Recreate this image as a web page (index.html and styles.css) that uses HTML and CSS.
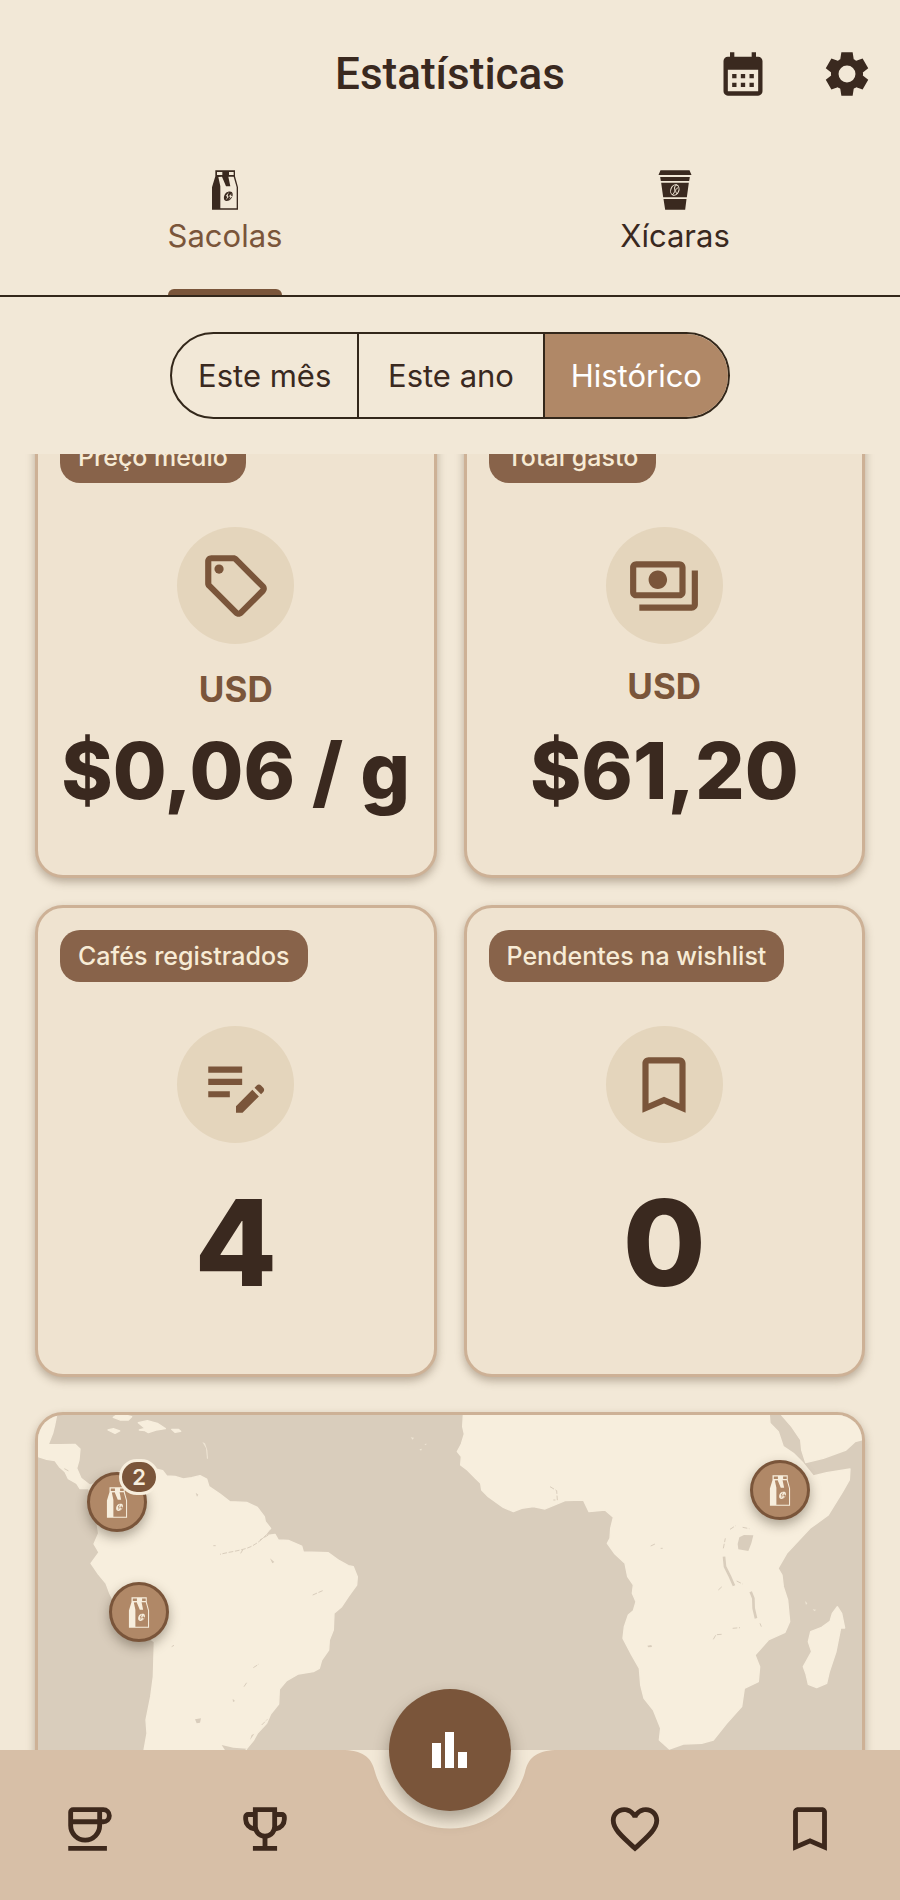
FILE: index.html
```html
<!DOCTYPE html>
<html lang="pt-BR">
<head>
    <meta charset="UTF-8">
    <meta name="viewport" content="width=device-width, initial-scale=1.0">
    <title>Estatísticas</title>
    <link rel="stylesheet" href="styles.css">
</head>
<body>
    <!-- shared coffee bag icon -->
    <svg class="sprite" aria-hidden="true">
        <symbol id="bag" viewBox="64 43 82 120">
            <path fill-rule="evenodd" d="M76 44H135V62L144 95V162H66V95L76 62ZM81 49V58H97V49ZM117 49V58H131V49ZM85 64L91 92V158H140V95L131 63H115L121 92H108L96 63Z"/>
            <path fill-rule="evenodd" d="M113 109C120 106 128 108 128 115C129 126 119 137 109 136C101 135 100 125 104 117C106 113 109 110 113 109ZM117 109L108 120L112 124L107 134L116 124L113 119ZM126 113L117 121L121 125L116 132L127 122L122 119Z"/>
        </symbol>
        <symbol id="bookmark" viewBox="0 0 24 24">
            <path d="M17 3H7c-1.1 0-2 .9-2 2v16l7-3 7 3V5c0-1.1-.9-2-2-2zm0 15-5-2.18L7 18V5h10v13z"/>
        </symbol>
    </svg>

    <div class="app">
        <header>
            <h1>Estatísticas</h1>
            <div class="actions">
                <button type="button" aria-label="Calendário">
                    <svg viewBox="0 0 24 24"><path d="M19 4h-1V2h-2v2H8V2H6v2H5c-1.1 0-2 .9-2 2v14c0 1.1.9 2 2 2h14c1.1 0 2-.9 2-2V6c0-1.1-.9-2-2-2zm0 16H5V10h14v10zM9 14H7v-2h2v2zm4 0h-2v-2h2v2zm4 0h-2v-2h2v2zm-8 4H7v-2h2v2zm4 0h-2v-2h2v2zm4 0h-2v-2h2v2z"/></svg>
                </button>
                <button type="button" aria-label="Configurações">
                    <svg viewBox="0 0 24 24"><path fill-rule="evenodd" d="M9.4 22l-.5-3.2q-.325-.125-.612-.3t-.563-.375L4.8 19.2l-2.6-4.5 2.5-2Q4.600 12.500 4.600 12.338v-.675q0-.163.1-.338L2.200 9.300l2.600-4.500 2.925 1.075q.275-.2.575-.375t.6-.3L9.400 2h5.200l.5 3.200q.325.125.613.3t.562.375l2.925-1.075 2.600 4.500-2.500 2q.1.175.1.363v.674q0 .163-.1.338l2.500 2-2.600 4.500-2.925-1.050q-.275.2-.575.375t-.6.3l-.5 3.200zM12 8.100a3.900 3.900 0 1 0 0 7.800 3.900 3.900 0 1 0 0-7.800z"/></svg>
                </button>
            </div>
        </header>

        <div class="tabs">
            <button type="button" class="tab active">
                <svg><use href="#bag"/></svg>
                <span>Sacolas</span>
            </button>
            <button type="button" class="tab">
                <svg viewBox="55 43 101 120">
                    <path d="M62 44H149L155 58H56ZM61 64H150L148 76H63ZM64 81H147L141 125H70ZM71 130H140L136 162H76Z"/>
                    <g fill="none" stroke="#f2e8d7" stroke-width="3">
                        <ellipse cx="105" cy="103" rx="12" ry="16" transform="rotate(22 105 103)"/>
                        <path d="M111 87C96 96 113 104 98 117M116 96C104 100 106 108 112 115"/>
                    </g>
                </svg>
                <span>Xícaras</span>
            </button>
        </div>

        <div class="segments">
            <button type="button">Este mês</button>
            <button type="button">Este ano</button>
            <button type="button" class="selected">Histórico</button>
        </div>

        <main>
            <div class="content">
                <section class="cards">
                    <article class="card">
                        <h2>Preço médio</h2>
                        <div class="icon">
                            <svg viewBox="0 0 24 24"><path d="M21.41 11.41l-8.83-8.83c-.37-.37-.88-.58-1.41-.58H4c-1.1 0-2 .9-2 2v7.17c0 .53.21 1.04.59 1.41l8.83 8.83c.78.78 2.05.78 2.83 0l7.17-7.17c.78-.78.78-2.04-.01-2.83zM12.83 20L4 11.17V4h7.17L20 12.83 12.83 20z"/><circle cx="6.5" cy="6.5" r="1.5"/></svg>
                        </div>
                        <div class="value">
                            <span class="currency">USD</span>
                            <strong>$0,06 / g</strong>
                        </div>
                    </article>
                    <article class="card">
                        <h2>Total gasto</h2>
                        <div class="icon">
                            <svg viewBox="0 0 24 24"><path d="M19 14V6c0-1.1-.9-2-2-2H3c-1.1 0-2 .9-2 2v8c0 1.1.9 2 2 2h14c1.1 0 2-.9 2-2zm-2 0H3V6h14v8zm-7-7c-1.66 0-3 1.34-3 3s1.34 3 3 3 3-1.34 3-3-1.34-3-3-3zm13 0v11c0 1.1-.9 2-2 2H4v-2h17V7h2z"/></svg>
                        </div>
                        <div class="value large">
                            <span class="currency">USD</span>
                            <strong>$61,20</strong>
                        </div>
                    </article>
                    <article class="card">
                        <h2>Cafés registrados</h2>
                        <div class="icon">
                            <svg viewBox="0 0 24 24"><path d="M3 10h11v2H3v-2zm0-2h11V6H3v2zm0 8h7v-2H3v2zm15.01-3.13.71-.71c.39-.39 1.02-.39 1.41 0l.71.71c.39.39.39 1.02 0 1.41l-.71.71-2.12-2.12zm-.71.71-5.3 5.3V21h2.12l5.3-5.3-2.12-2.12z"/></svg>
                        </div>
                        <div class="value count"><strong>4</strong></div>
                    </article>
                    <article class="card">
                        <h2>Pendentes na wishlist</h2>
                        <div class="icon">
                            <svg><use href="#bookmark"/></svg>
                        </div>
                        <div class="value count"><strong>0</strong></div>
                    </article>
                </section>

                <section class="map">
                    <svg class="world" viewBox="54 45 2472 1140" aria-hidden="true">
                        <g class="land">
                            <!-- Central and South America -->
                            <path d="M54 45H110L104 75 98 100 85 133 120 134 165 133 180 147 177 180 170 205 183 235 210 256 300 215 400 205 428 212 440 228 465 229 490 237 515 233 540 227 560 237 567 260 600 282 630 305 680 307 712 322 733 350 736 365 752 385 733 408 765 403 775 420 805 421 845 438 850 456 925 458 958 482 985 497 1000 500 1012 530 1010 555 985 590 965 620 942 640 940 690 928 720 926 750 905 780 898 805 880 815 835 822 800 842 778 868 776 912 752 942 740 970 712 1000 700 1022 680 1046 650 1100 600 1190H370L372 1050 381 1000 378 960 392 890 400 830 403 725 330 680 290 620 270 582 258 550 235 522 213 490 237 457 222 432 236 400 220 300 205 265 180 266 170 250 145 236 135 215 118 200 105 182 80 178 54 170Z"/>
                            <path d="M280 52 300 60 325 60 335 50 315 45 290 45ZM264 90 280 86 299 93 285 100ZM355 68 382 62 412 70 436 86 408 90 385 98 375 92 358 90 375 85ZM455 88 475 88 482 94 465 97Z"/>
                            <path class="islet" d="M547 126 555 130 562 150 564 175 561 178 558 145ZM1172 112 1182 113 1178 119ZM1198 148 1206 146 1203 152ZM1213 132 1221 131 1217 136Z"/>
                            <!-- Africa, Arabia and Madagascar -->
                            <g transform="translate(1260 0)">
                                <path d="M70 45 68 80 73 102 64 132 52 155 64 170 62 195 82 210 108 236 122 250 125 270 145 290 190 322 220 335 245 325 280 320 315 327 375 302 430 300 447 335 495 330 520 352 512 385 510 415 502 430 525 462 555 490 563 530 580 555 577 580 588 605 580 632 565 645 553 680 549 715 575 765 598 805 602 855 612 895 640 930 662 985 658 1020 688 1047 730 1032 785 1030 820 1020 860 970 905 920 913 865 955 845 959 800 945 765 985 720 1035 697 1049 665 1043 600 1030 560 1026 525 1014 505 1040 460 1110 385 1165 345 1208 275 1228 240 1230 207 1160 218 1120 228 1090 190 1060 160 1030 140 1015 95 990 70 988 45Z"/>
                                <path d="M1025 45 1055 80 1082 120 1085 150 1097 188 1150 175 1218 150 1245 125 1270 118V45Z"/>
                                <path d="M1192 620 1205 640 1214 684 1202 684 1188 755 1168 815 1160 850 1130 863 1105 853 1098 822 1090 800 1115 755 1105 725 1112 695 1145 682 1170 664 1177 640Z"/>
                                <path class="islet" d="M1095 603 1102 610 1098 615ZM1118 628 1129 629 1123 634Z"/>
                            </g>
                        </g>
                        <g class="water">
                            <path d="M605 1035 640 1043 680 1046 650 1070 618 1055ZM525 958 543 955 540 968 530 970ZM527 278 535 284 531 290ZM750 475 763 486 757 490ZM638 896 645 903 639 906ZM695 1005 703 1001 690 1020Z"/>
                            <path class="river" d="M752 390C735 410 715 430 690 441S630 455 600 463M745 405 720 420M878 585 908 572M700 803 717 792M672 860 682 845M725 975 742 958M455 740 462 736M580 437 587 437M662 460 668 450M133 206 148 214"/>
                            <g transform="translate(1260 0)">
                                <path d="M898 412 912 405 940 406 934 430 925 453 895 448 893 432ZM622 737 634 735 636 741 625 742Z"/>
                                <path class="lake" d="M852 470 855 500 870 530 882 557M932 575 940 595 941 625 948 655"/>
                                <path class="river" d="M330 260 350 272 352 300 340 300M850 445 856 415M870 388 887 377M908 382 928 386M835 570 848 558M890 543 908 552M820 718 828 704 845 703M878 685 900 683M960 670 964 680M632 438 645 432M662 445 668 445"/>
                            </g>
                        </g>
                    </svg>
                    <button type="button" class="pin colombia" aria-label="Colômbia, 2 cafés">
                        <svg><use href="#bag"/></svg>
                        <span class="badge">2</span>
                    </button>
                    <button type="button" class="pin peru" aria-label="Peru">
                        <svg><use href="#bag"/></svg>
                    </button>
                    <button type="button" class="pin ethiopia" aria-label="Etiópia">
                        <svg><use href="#bag"/></svg>
                    </button>
                </section>
            </div>
        </main>

        <nav>
            <!-- bar background with the notch for the round button -->
            <div class="nav-bg">
                <span></span>
                <svg viewBox="0 0 210 150"><path d="M0 0C20 1 27 9 30 22A78 78 0 0 0 180 22C183 9 190 1 210 0V150H0Z"/></svg>
                <span></span>
            </div>
            <a href="#cafes" aria-label="Cafés">
                <svg viewBox="0 0 24 24"><path class="line" d="M4 9V5a1 1 0 0 1 1-1h12.500a2.500 2.500 0 0 1 0 5H4v1.600a6 6 0 0 0 12 0V4.500M3 20h16"/></svg>
            </a>
            <a href="#ranking" aria-label="Ranking">
                <svg viewBox="0 0 24 24"><path d="M7 21v-2h4v-3.100q-1.225-.275-2.187-1.037T7.400 12.950q-1.875-.225-3.137-1.637T3 8V7q0-.825.588-1.412T5 5h2V3h10v2h2q.825 0 1.413.588T21 7v1q0 1.900-1.263 3.313T16.600 12.950q-.45 1.150-1.412 1.913T13 15.900V19h4v2zm0-10.200V7H5v1q0 .95.55 1.713T7 10.800m5 3.200q1.250 0 2.125-.875T15 11V5H9v6q0 1.250.875 2.125T12 14m5-3.200q.9-.325 1.450-1.088T19 8V7h-2z"/></svg>
            </a>
            <a href="#estatisticas" class="fab" aria-label="Estatísticas">
                <svg viewBox="0 0 36 36"><path d="M0 11h9v25H0zM13 0h9v36h-9zM26 20h9v16h-9z"/></svg>
            </a>
            <a href="#favoritos" aria-label="Favoritos">
                <svg viewBox="0 0 24 24"><path d="M16.500 3c-1.740 0-3.410.81-4.500 2.090C10.910 3.810 9.240 3 7.500 3 4.420 3 2 5.420 2 8.500c0 3.780 3.400 6.860 8.550 11.540L12 21.350l1.450-1.320C18.600 15.360 22 12.280 22 8.500 22 5.420 19.580 3 16.500 3zm-4.400 15.550l-.1.100-.1-.1C7.140 14.240 4 11.390 4 8.500 4 6.500 5.500 5 7.500 5c1.540 0 3.040.99 3.570 2.360h1.870C13.460 5.990 14.960 5 16.500 5c2 0 3.500 1.500 3.500 3.500 0 2.890-3.140 5.740-7.900 10.050z"/></svg>
            </a>
            <a href="#wishlist" aria-label="Wishlist">
                <svg><use href="#bookmark"/></svg>
            </a>
        </nav>
    </div>
</body>
</html>
```
FILE: styles.css
```css
* {
    box-sizing: border-box;
}
body {
    font-family: Inter, "Noto Sans", sans-serif;
    margin: 0;
    background: #f2e8d7;
    color: #3a291f;
}
button {
    font: inherit;
    color: inherit;
    background: none;
    border: none;
    padding: 0;
    cursor: pointer;
}
svg {
    display: block;
    fill: currentColor;
}
.sprite {
    position: absolute;
    width: 0;
    height: 0;
}
.app {
    display: flex;
    flex-direction: column;
    height: 100vh;
}

/* top bar */
header {
    display: grid;
    grid-template-columns: 1fr auto 1fr;
    align-items: center;
    height: 148px;
    padding: 0 27px;
}
header h1 {
    grid-column: 2;
    margin: 0;
    font-family: Roboto, sans-serif;
    font-size: 44px;
    font-weight: 500;
}
.actions {
    display: flex;
    justify-content: flex-end;
    gap: 52px;
}
.actions svg {
    width: 52px;
    height: 52px;
}

/* tabs */
.tabs {
    display: grid;
    grid-template-columns: 1fr 1fr;
    justify-items: center;
    border-bottom: 2px solid #33271a;
}
.tab {
    display: flex;
    flex-direction: column;
    align-items: center;
    padding-top: 22px;
}
.tab svg {
    width: 40px;
    height: 40px;
}
.tab span {
    margin-top: 8px;
    font-size: 31px;
    line-height: 36px;
}
.tab::after {
    content: "";
    width: 100%;
    height: 6px;
    margin-top: 35px;
    border-radius: 6px 6px 0 0;
}
.tab.active {
    color: #7a553a;
}
.tab.active svg {
    color: #3a291f;
}
.tab.active::after {
    background: #7a553a;
}

/* period filter */
.segments {
    display: grid;
    grid-template-columns: repeat(3, 1fr);
    align-self: center;
    margin: 35px 0;
    border: 2px solid #33271a;
    border-radius: 44px;
    overflow: hidden;
}
.segments button {
    padding: 0 26px;
    font-size: 31px;
    line-height: 83px;
}
.segments button + button {
    border-left: 2px solid #33271a;
}
.segments .selected {
    background: #b08867;
    color: #fff;
}

main {
    flex: 1;
    min-height: 0;
    overflow: hidden;
}
.content {
    margin-top: -48px;
    padding: 0 35px;
}
.cards {
    display: grid;
    grid-template-columns: 1fr 1fr;
    gap: 27px;
}
.card {
    display: flex;
    flex-direction: column;
    align-items: center;
    height: 472px;
    padding: 22px 22px 32px;
    background: #efe3d0;
    border: 3px solid #cdb196;
    border-radius: 28px;
    box-shadow: 0 4px 8px rgba(80, 60, 40, 0.35);
}
.card h2 {
    align-self: flex-start;
    margin: 0;
    padding: 0 18px;
    background: #88634a;
    border-radius: 20px;
    color: #f7ebd5;
    font-size: 25px;
    font-weight: 500;
    line-height: 52px;
}
.icon {
    display: grid;
    place-items: center;
    width: 117px;
    height: 117px;
    margin-top: 44px;
    background: #e4d5bc;
    border-radius: 50%;
    color: #7a553a;
}
.icon svg {
    width: 74px;
    height: 74px;
}
.value {
    display: flex;
    flex: 1;
    flex-direction: column;
    align-items: center;
    justify-content: center;
    font-size: 78px;
    line-height: 110px;
    white-space: nowrap;
}
.value strong {
    font-weight: 800;
}
.value.large {
    line-height: 116px;
}
.value.count {
    font-size: 120px;
}
.currency {
    color: #7a553a;
    font-size: 35px;
    font-weight: 700;
    line-height: 54px;
}

/* map */
.map {
    position: relative;
    margin-top: 35px;
    border: 3px solid #cdb196;
    border-radius: 28px;
    background: #d9cdbc;
    box-shadow: 0 4px 8px rgba(80, 60, 40, 0.35);
}
.world {
    width: 100%;
    border-radius: 25px;
}
.land {
    fill: #f7eedd;
    stroke: #f7eedd;
    stroke-width: 4;
    stroke-linejoin: round;
}
.islet {
    stroke: none;
    opacity: 0.7;
}
.water {
    fill: #d9cdbc;
}
.river, .lake {
    fill: none;
    stroke: #d9cdbc;
    stroke-width: 3;
}
.river {
    stroke-dasharray: 14 5;
}
.lake {
    stroke-width: 8;
}
.pin {
    position: absolute;
    display: grid;
    place-items: center;
    width: 60px;
    height: 60px;
    margin: -30px;
    background: #b08867;
    border: 3px solid #7a553a;
    border-radius: 50%;
    color: #f7eedd;
    box-shadow: 0 5px 12px rgba(60, 50, 35, 0.4);
}
.pin svg {
    width: 30px;
    height: 31px;
}
.colombia {
    left: 9.6%;
    top: 87px;
}
.peru {
    left: 12.3%;
    top: 197px;
}
.ethiopia {
    left: 90%;
    top: 75px;
}
.badge {
    position: absolute;
    top: -16px;
    right: -15px;
    width: 40px;
    background: #7a553a;
    border: 3px solid #f7eedd;
    border-radius: 18px;
    font-size: 22px;
    font-weight: 600;
    line-height: 30px;
}

/* bottom navigation */
nav {
    position: relative;
    display: grid;
    grid-template-columns: 1fr 1fr 194px 1fr 1fr;
    justify-items: center;
    height: 150px;
    padding: 50px 2px 0;
}
nav a {
    position: relative;
    color: #3d281c;
}
nav a svg {
    width: 58px;
    height: 58px;
}
.line {
    fill: none;
    stroke: currentColor;
    stroke-width: 2;
}
.nav-bg {
    position: absolute;
    inset: 0;
    display: flex;
    color: #d7bfa7;
}
.nav-bg span {
    flex: 1;
    background: #d7bfa7;
}
.nav-bg svg {
    width: 210px;
    height: 150px;
}
nav .fab {
    display: grid;
    place-items: center;
    width: 122px;
    height: 122px;
    margin-top: -111px;
    background: #7a553a;
    border-radius: 50%;
    color: #fff;
    box-shadow: 0 8px 16px rgba(60, 50, 35, 0.4);
}
nav .fab svg {
    width: 36px;
    height: 36px;
}
```
